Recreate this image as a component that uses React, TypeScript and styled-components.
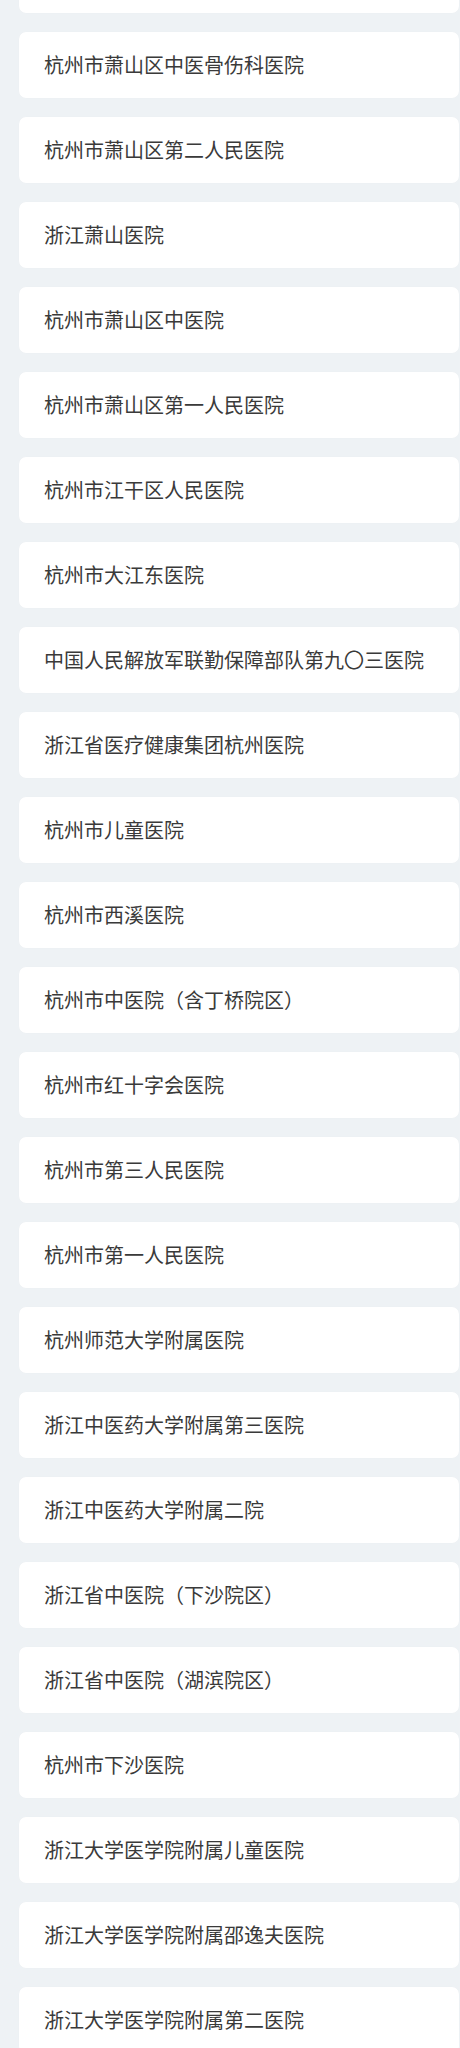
import React from "react";
import styled, { createGlobalStyle } from "styled-components";

const GlobalStyle = createGlobalStyle`
  html, body {
    margin: 0;
    padding: 0;
    background: #eef2f5;
  }
  body {
    font-family: "Noto Sans CJK SC", "Noto Sans", sans-serif;
    overflow: hidden;
  }
`;

const Page = styled.div`
  width: 460px;
  height: 2048px;
  overflow: hidden;
  background: #eef2f5;
`;

const List = styled.ul`
  list-style: none;
  margin: -53px 1px 0 19px;
  padding: 0;
  display: flex;
  flex-direction: column;
  gap: 19px;
`;

const Card = styled.li`
  height: 66px;
  box-sizing: border-box;
  background: #ffffff;
  border-radius: 7px;
  box-shadow: 0 0 1px rgba(0, 0, 0, 0.04);
  display: flex;
  align-items: center;
  padding: 0 25px;
  font-size: 20px;
  line-height: 1;
  color: #3a3a3a;
  white-space: nowrap;
`;

const hospitals = [
  "",
  "杭州市萧山区中医骨伤科医院",
  "杭州市萧山区第二人民医院",
  "浙江萧山医院",
  "杭州市萧山区中医院",
  "杭州市萧山区第一人民医院",
  "杭州市江干区人民医院",
  "杭州市大江东医院",
  "中国人民解放军联勤保障部队第九〇三医院",
  "浙江省医疗健康集团杭州医院",
  "杭州市儿童医院",
  "杭州市西溪医院",
  "杭州市中医院（含丁桥院区）",
  "杭州市红十字会医院",
  "杭州市第三人民医院",
  "杭州市第一人民医院",
  "杭州师范大学附属医院",
  "浙江中医药大学附属第三医院",
  "浙江中医药大学附属二院",
  "浙江省中医院（下沙院区）",
  "浙江省中医院（湖滨院区）",
  "杭州市下沙医院",
  "浙江大学医学院附属儿童医院",
  "浙江大学医学院附属邵逸夫医院",
  "浙江大学医学院附属第二医院",
];

export default function App() {
  return (
    <Page>
      <GlobalStyle />
      <List>
        {hospitals.map((name, i) => (
          <Card key={i}>{name}</Card>
        ))}
      </List>
    </Page>
  );
}
